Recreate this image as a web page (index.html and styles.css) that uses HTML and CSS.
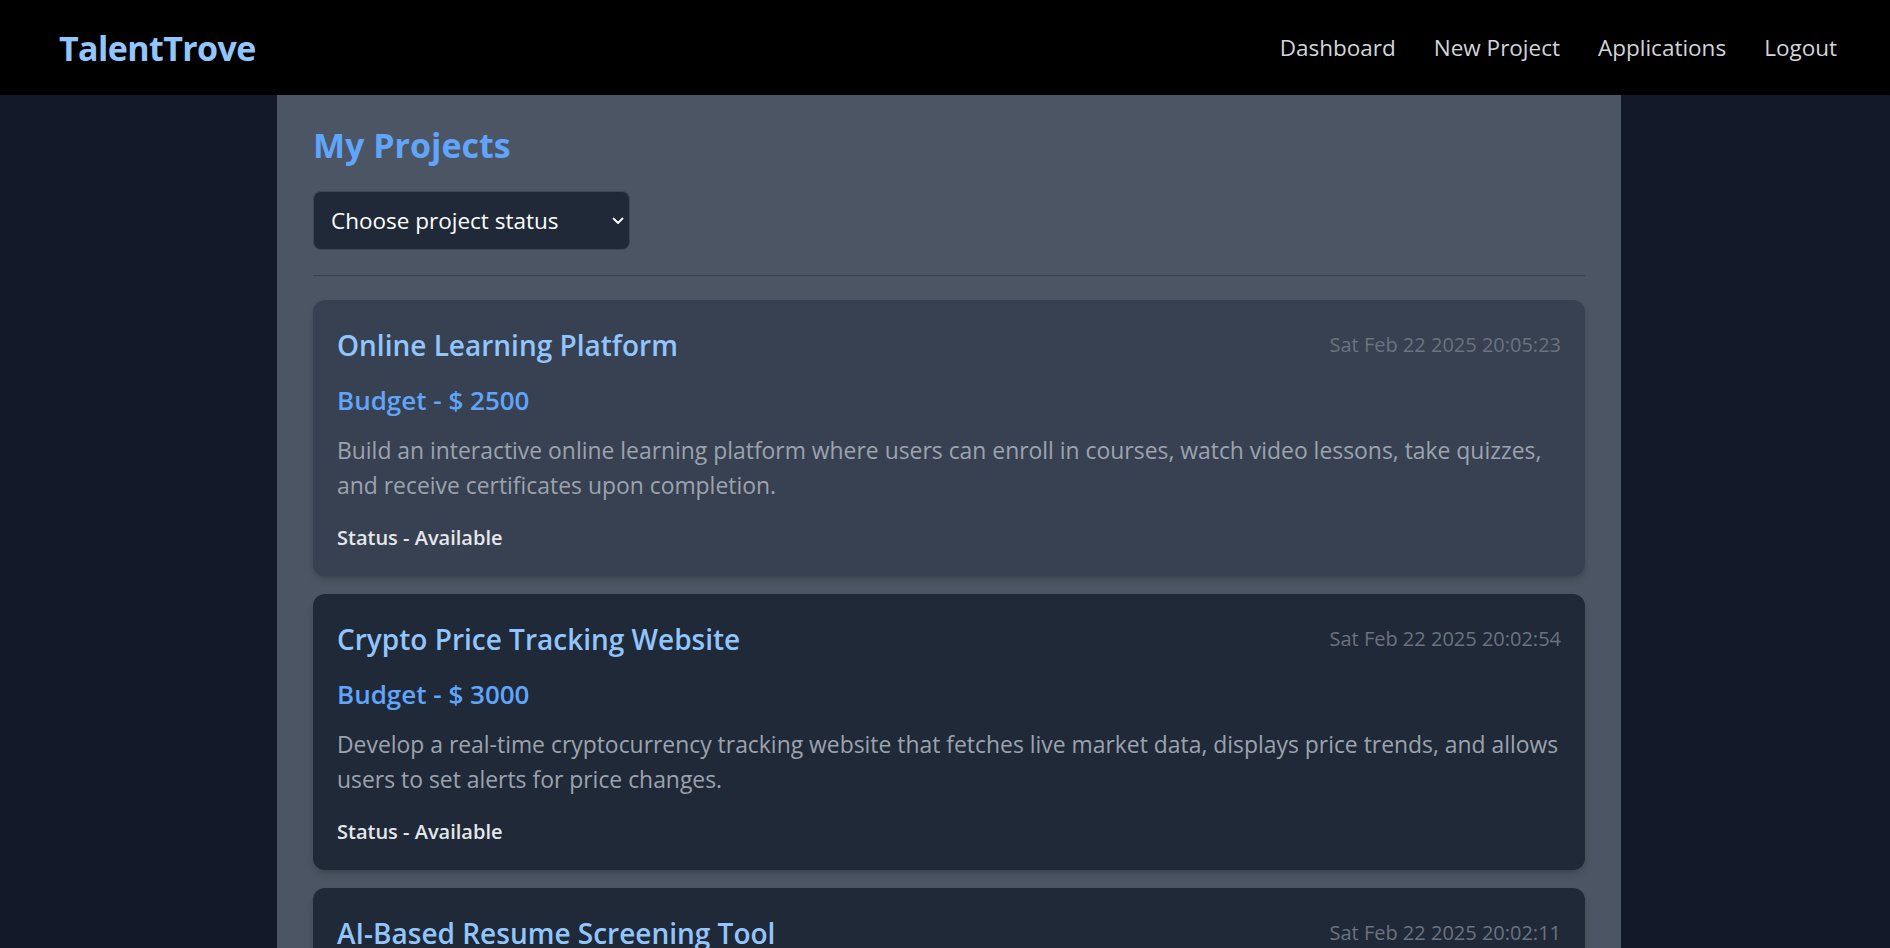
FILE: index.html
```html
<!DOCTYPE html>
<html lang="en">
<head>
<meta charset="utf-8">
<title>TalentTrove - My Projects</title>
<link rel="stylesheet" href="styles.css">
</head>
<body>
<nav class="navbar">
  <a class="logo" href="#">TalentTrove</a>
  <ul class="nav-links">
    <li><a href="#">Dashboard</a></li>
    <li><a href="#">New Project</a></li>
    <li><a href="#">Applications</a></li>
    <li><a href="#">Logout</a></li>
  </ul>
</nav>
<div class="page">
  <main class="container">
    <h1 class="page-title">My Projects</h1>
    <div class="select-wrap">
      <select class="status-select">
        <option>Choose project status</option>
        <option>Available</option>
        <option>In Progress</option>
        <option>Completed</option>
      </select>
      <svg class="chevron" width="12" height="8" viewBox="0 0 12 8"><path d="M1.5 1.5 L6 6 L10.5 1.5" fill="none" stroke="#ffffff" stroke-width="1.8" stroke-linecap="round" stroke-linejoin="round"/></svg>
    </div>
    <hr class="divider">
    <section class="project-list">
      <article class="card card-active">
        <div class="card-head">
          <h2 class="card-title">Online Learning Platform</h2>
          <span class="card-date">Sat Feb 22 2025 20:05:23</span>
        </div>
        <h3 class="card-budget">Budget - $ 2500</h3>
        <p class="card-desc">Build an interactive online learning platform where users can enroll in courses, watch video lessons, take quizzes, and receive certificates upon completion.</p>
        <p class="card-status">Status - Available</p>
      </article>
      <article class="card">
        <div class="card-head">
          <h2 class="card-title">Crypto Price Tracking Website</h2>
          <span class="card-date">Sat Feb 22 2025 20:02:54</span>
        </div>
        <h3 class="card-budget">Budget - $ 3000</h3>
        <p class="card-desc">Develop a real-time cryptocurrency tracking website that fetches live market data, displays price trends, and allows users to set alerts for price changes.</p>
        <p class="card-status">Status - Available</p>
      </article>
      <article class="card">
        <div class="card-head">
          <h2 class="card-title">AI-Based Resume Screening Tool</h2>
          <span class="card-date">Sat Feb 22 2025 20:02:11</span>
        </div>
        <h3 class="card-budget">Budget - $ 4000</h3>
        <p class="card-desc">Create an AI-powered tool that analyzes resumes, ranks candidates based on job requirements, and highlights the most relevant skills.</p>
        <p class="card-status">Status - Available</p>
      </article>
    </section>
  </main>
</div>
</body>
</html>
```
FILE: styles.css
```css
* { box-sizing: border-box; }
html, body { margin: 0; padding: 0; }
body {
  background: #111827;
  font-family: "Open Sans", "Noto Sans", "Liberation Sans", sans-serif;
  color: #e5e7eb;
}
a { text-decoration: none; }

.navbar {
  height: 95px;
  background: #000000;
  display: flex;
  align-items: center;
  justify-content: space-between;
  padding: 0 53px 0 59px;
}
.logo {
  font-size: 34px;
  font-weight: 700;
  color: #93c5fd;
  letter-spacing: -0.6px;
  line-height: 44px;
}
.nav-links {
  list-style: none;
  margin: 0;
  padding: 0;
  display: flex;
  gap: 38px;
}
.nav-links a {
  font-size: 22.5px;
  color: #d1d5db;
  line-height: 30px;
}

.page {
  padding-left: 8px;
}
.container {
  width: 1344px;
  margin: 0 auto;
  background: #4b5563;
  padding: 28px 36px 40px;
  min-height: 853px;
}
.page-title {
  margin: 0;
  font-size: 34px;
  line-height: 44px;
  font-weight: 700;
  color: #60a5fa;
}
.select-wrap {
  position: relative;
  display: inline-block;
  margin-top: 24px;
}
.status-select {
  appearance: none;
  -webkit-appearance: none;
  width: 317px;
  height: 59px;
  background: #1f2937;
  color: #ffffff;
  border: 1px solid #3b4656;
  border-radius: 8px;
  font-family: "Open Sans", "Noto Sans", sans-serif;
  font-size: 22.5px;
  padding: 0 40px 0 17px;
  outline: none;
  display: block;
}
.chevron {
  position: absolute;
  right: 6px;
  top: 26px;
  pointer-events: none;
}
.divider {
  border: 0;
  border-top: 1px solid #374151;
  margin: 25px 0 24px;
}

.project-list {
  display: flex;
  flex-direction: column;
  gap: 18.5px;
}
.card {
  background: #1f2937;
  border-radius: 12px;
  padding: 25px 24px 24px;
  box-shadow: 0 5px 8px -2px rgba(0, 0, 0, 0.18), 0 2px 4px -2px rgba(0, 0, 0, 0.12);
}
.card-active {
  background: #374151;
}
.card-head {
  display: flex;
  justify-content: space-between;
  align-items: center;
  height: 40px;
}
.card-title {
  margin: 0;
  font-size: 28px;
  line-height: 40px;
  font-weight: 600;
  color: #93c5fd;
}
.card-date {
  font-size: 20px;
  line-height: 28px;
  color: #6b7280;
}
.card-budget {
  margin: 18px 0 0;
  font-size: 26px;
  line-height: 34px;
  font-weight: 600;
  color: #60a5fa;
}
.card-desc {
  margin: 15.5px 0 0;
  font-size: 22.9px;
  line-height: 35.5px;
  color: #9ca3af;
}
.card-status {
  margin: 20px 0 0;
  font-size: 20px;
  line-height: 28px;
  font-weight: 600;
  color: #e5e7eb;
}
```
